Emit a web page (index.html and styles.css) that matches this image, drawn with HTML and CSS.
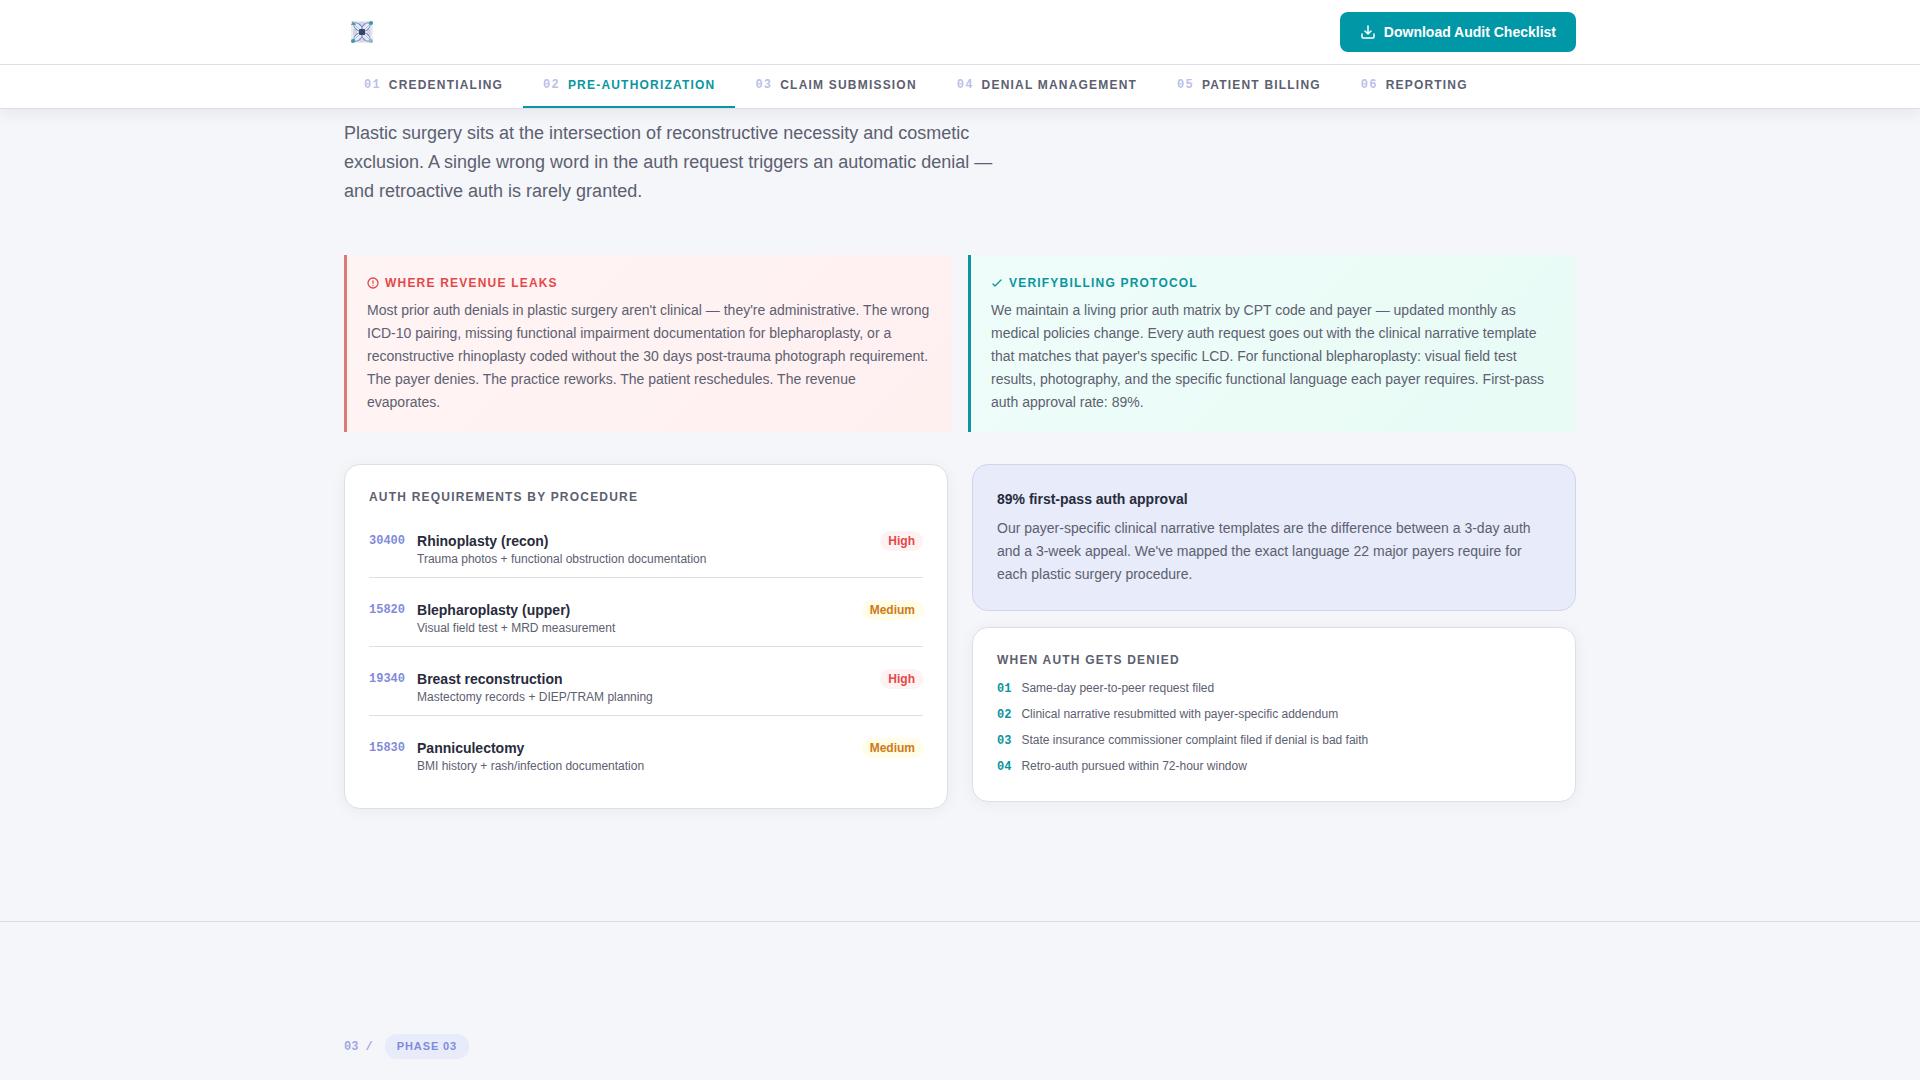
FILE: index.html
```html
<!DOCTYPE html>
<html lang="en">
<head>
<meta charset="utf-8">
<meta name="viewport" content="width=device-width, initial-scale=1">
<title>Plastic Surgery Billing Audit</title>
<link rel="stylesheet" href="styles.css">
</head>
<body>
<header class="site-header">
  <div class="topbar">
    <div class="container topbar-row">
      <a class="logo" href="#" aria-label="Home">
        <svg width="22" height="22" viewBox="0 0 22 22" fill="none">
          <rect width="22" height="22" fill="#e9ecf1"/>
          <path d="M2 8h4v6H2zM8 1h6v4H8zM16 8h4v6h-4zM8 17h6v4H8z" fill="#d3d8de"/>
          <path d="M2 2l18 18M20 2L2 20" stroke="#b4bcd8"/>
          <g stroke="#6f86e8" stroke-width="1">
            <ellipse cx="7" cy="6" rx="5" ry="3" transform="rotate(45 7 6)"/>
            <ellipse cx="15" cy="6" rx="5" ry="3" transform="rotate(-45 15 6)"/>
            <ellipse cx="7" cy="16" rx="5" ry="3" transform="rotate(-45 7 16)"/>
            <ellipse cx="15" cy="16" rx="5" ry="3" transform="rotate(45 15 16)"/>
          </g>
          <rect x="8" y="8" width="6" height="6" rx="1" fill="#36475a"/>
          <circle cx="20" cy="2" r="2" fill="#3d9a9a"/>
          <circle cx="2" cy="20" r="2" fill="#3d9a9a"/>
          <path d="M0 4l2-4 3 4z" fill="#5a9a9a"/>
          <circle cx="20" cy="20" r="2" fill="#93b9b5"/>
        </svg>
      </a>
      <button class="download" type="button">
        <svg width="16" height="16" viewBox="0 0 16 16" fill="none" stroke="currentColor" stroke-width="1.5" stroke-linecap="round" stroke-linejoin="round">
          <path d="M2 10v3a1 1 0 0 0 1 1h10a1 1 0 0 0 1-1v-3M5 7l3 3 3-3M8 2v8"/>
        </svg>
        Download Audit Checklist
      </button>
    </div>
  </div>
  <nav class="phases" aria-label="Phases">
    <div class="container phases-row">
      <a class="tab" href="#p1"><span class="tab-num">01</span>CREDENTIALING</a>
      <a class="tab tab-active" href="#p2" aria-current="true"><span class="tab-num">02</span>PRE-AUTHORIZATION</a>
      <a class="tab" href="#p3"><span class="tab-num">03</span>CLAIM SUBMISSION</a>
      <a class="tab" href="#p4"><span class="tab-num">04</span>DENIAL MANAGEMENT</a>
      <a class="tab" href="#p5"><span class="tab-num">05</span>PATIENT BILLING</a>
      <a class="tab" href="#p6"><span class="tab-num">06</span>REPORTING</a>
    </div>
  </nav>
</header>
<main>
  <section class="phase" id="p2">
    <div class="container">
      <p class="intro">Plastic surgery sits at the intersection of reconstructive necessity and cosmetic exclusion. A single wrong word in the auth request triggers an automatic denial — and retroactive auth is rarely granted.</p>
      <div class="callouts">
        <article class="callout callout-leak">
          <h2 class="callout-title">
            <svg width="12" height="12" viewBox="0 0 12 12" fill="none" stroke="currentColor" stroke-width="1.3" stroke-linecap="round"><circle cx="6" cy="6" r="5"/><path d="M6 3.8v2.4M6 8.2v0"/></svg>
            WHERE REVENUE LEAKS
          </h2>
          <p class="copy">Most prior auth denials in plastic surgery aren't clinical — they're administrative. The wrong ICD-10 pairing, missing functional impairment documentation for blepharoplasty, or a reconstructive rhinoplasty coded without the 30 days post-trauma photograph requirement. The payer denies. The practice reworks. The patient reschedules. The revenue evaporates.</p>
        </article>
        <article class="callout callout-fix">
          <h2 class="callout-title">
            <svg width="12" height="12" viewBox="0 0 12 12" fill="none" stroke="currentColor" stroke-width="1.3" stroke-linecap="round" stroke-linejoin="round"><path d="M2 7l2 2 6-6"/></svg>
            VERIFYBILLING PROTOCOL
          </h2>
          <p class="copy">We maintain a living prior auth matrix by CPT code and payer — updated monthly as medical policies change. Every auth request goes out with the clinical narrative template that matches that payer's specific LCD. For functional blepharoplasty: visual field test results, photography, and the specific functional language each payer requires. First-pass auth approval rate: 89%.</p>
        </article>
      </div>
      <div class="details">
        <article class="card">
          <h2 class="card-title">AUTH REQUIREMENTS BY PROCEDURE</h2>
          <ul class="procedures">
            <li class="procedure"><span class="code">30400</span><div class="procedure-text"><h3 class="name">Rhinoplasty (recon)</h3><p class="small">Trauma photos + functional obstruction documentation</p></div><span class="badge badge-high">High</span></li>
            <li class="procedure"><span class="code">15820</span><div class="procedure-text"><h3 class="name">Blepharoplasty (upper)</h3><p class="small">Visual field test + MRD measurement</p></div><span class="badge badge-medium">Medium</span></li>
            <li class="procedure"><span class="code">19340</span><div class="procedure-text"><h3 class="name">Breast reconstruction</h3><p class="small">Mastectomy records + DIEP/TRAM planning</p></div><span class="badge badge-high">High</span></li>
            <li class="procedure"><span class="code">15830</span><div class="procedure-text"><h3 class="name">Panniculectomy</h3><p class="small">BMI history + rash/infection documentation</p></div><span class="badge badge-medium">Medium</span></li>
          </ul>
        </article>
        <div class="side">
          <article class="card card-stat">
            <h3 class="name">89% first-pass auth approval</h3>
            <p class="copy">Our payer-specific clinical narrative templates are the difference between a 3-day auth and a 3-week appeal. We've mapped the exact language 22 major payers require for each plastic surgery procedure.</p>
          </article>
          <article class="card">
            <h2 class="card-title">WHEN AUTH GETS DENIED</h2>
            <ol class="steps">
              <li class="step"><span class="step-num">01</span><span class="small">Same-day peer-to-peer request filed</span></li>
              <li class="step"><span class="step-num">02</span><span class="small">Clinical narrative resubmitted with payer-specific addendum</span></li>
              <li class="step"><span class="step-num">03</span><span class="small">State insurance commissioner complaint filed if denial is bad faith</span></li>
              <li class="step"><span class="step-num">04</span><span class="small">Retro-auth pursued within 72-hour window</span></li>
            </ol>
          </article>
        </div>
      </div>
    </div>
  </section>
  <section class="phase-next" id="p3">
    <div class="container label-row">
      <span class="label-num">03 /</span>
      <span class="label-pill">PHASE 03</span>
    </div>
  </section>
</main>
</body>
</html>
```
FILE: styles.css
```css
* { box-sizing: border-box; }
body, h2, h3, p, ul, ol { margin: 0; padding: 0; }
ul, ol { list-style: none; }
svg { display: block; flex: none; }

body {
  background: #f4f6fa;
  color: #5c6070;
  font-family: "Liberation Sans", Arial, sans-serif;
  font-size: 14px;
}

.container {
  width: 100%;
  max-width: 1280px;
  margin: 0 auto;
  padding: 0 24px;
}

/* Header */
.site-header {
  position: sticky;
  top: 0;
  z-index: 10;
  background: #fff;
  border-bottom: 1px solid #dddfe4;
  box-shadow: 0 4px 16px rgba(30, 35, 60, 0.07);
}
.topbar { border-bottom: 1px solid #dddfe4; }
.topbar-row {
  display: flex;
  align-items: center;
  justify-content: space-between;
  height: 64px;
}
.logo { padding: 7px; }
.download {
  display: flex;
  align-items: center;
  gap: 8px;
  height: 40px;
  padding: 0 20px;
  border: 0;
  border-radius: 8px;
  background: #0097a7;
  color: #fff;
  font: bold 14px/20px "Liberation Sans", Arial, sans-serif;
}
.phases-row { display: flex; }
.tab {
  display: flex;
  gap: 8px;
  padding: 12px 20px;
  border-bottom: 2px solid transparent;
  color: #5c6070;
  font-size: 12px;
  font-weight: bold;
  line-height: 17px;
  letter-spacing: 0.1em;
  text-decoration: none;
  white-space: nowrap;
}
.tab-active { border-color: #0a95a0; color: #0a95a0; }
.tab-num {
  color: #bcbfea;
  font-family: "Liberation Mono", monospace;
}

/* Phase section */
.phase { padding: 10px 0 112px; }
.intro {
  max-width: 672px;
  margin-bottom: 49px;
  font-size: 18px;
  line-height: 29px;
}
.callouts {
  display: grid;
  grid-template-columns: 1fr 1fr;
  gap: 16px;
  margin-bottom: 32px;
}
.callout {
  padding: 20px 20px 18px;
  border-left: 3px solid;
  border-radius: 0 4px 4px 0;
}
.callout-leak {
  border-color: #e07777;
  background: linear-gradient(135deg, #fff4f4, #fff0f0);
}
.callout-fix {
  border-color: #0a95a0;
  background: linear-gradient(135deg, #effdfa, #e8fbf5);
}
.callout-title {
  display: flex;
  align-items: center;
  gap: 6px;
  margin-bottom: 8px;
  font-size: 12px;
  line-height: 16px;
  letter-spacing: 0.1em;
}
.callout-leak .callout-title { color: #e54848; }
.callout-fix .callout-title { color: #0a95a0; }
.copy { font-size: 14px; line-height: 23px; }

/* Cards */
.details {
  display: grid;
  grid-template-columns: 1fr 1fr;
  align-items: start;
  gap: 24px;
}
.side { display: grid; gap: 16px; }
.card {
  padding: 24px;
  border: 1px solid #dddfe6;
  border-radius: 16px;
  background: #fff;
  box-shadow: 0 2px 16px rgba(30, 35, 60, 0.05);
}
.card-stat {
  border-color: #d0d5ec;
  background: #e7ebfa;
  box-shadow: none;
}
.card-title {
  font-size: 12px;
  line-height: 16px;
  letter-spacing: 0.1em;
}
.name {
  color: #282b3c;
  font-size: 14px;
  line-height: 20px;
}
.card-stat .name { margin-bottom: 8px; }
.small { font-size: 12px; line-height: 16px; }

.procedures { display: grid; gap: 12px; margin-top: 16px; }
.procedure {
  display: flex;
  align-items: flex-start;
  gap: 12px;
  padding: 10px 0;
  border-bottom: 1px solid #dddfe4;
}
.procedure:last-child { border-bottom: 0; }
.procedure-text { flex: 1; }
.code {
  color: #7f8bda;
  font: bold 12px/20px "Liberation Mono", monospace;
}
.badge {
  padding: 2px 8px;
  border-radius: 10px;
  font-size: 12px;
  font-weight: bold;
  line-height: 16px;
}
.badge-high { background: #fef2f2; color: #e54848; }
.badge-medium { background: #fffce8; color: #cf7a17; }

.steps { display: grid; gap: 7px; margin-top: 12px; }
.step { display: flex; gap: 10px; }
.step-num {
  color: #0a95a0;
  font: bold 12px/19px "Liberation Mono", monospace;
}

/* Following phase */
.phase-next {
  padding-top: 112px;
  border-top: 1px solid #dddfe4;
}
.label-row { display: flex; align-items: center; gap: 12px; }
.label-num {
  color: #a3a8e0;
  font: bold 12px/16px "Liberation Mono", monospace;
}
.label-pill {
  padding: 4px 12px;
  border-radius: 12px;
  background: #e7ebfa;
  color: #7f8bda;
  font-size: 11px;
  font-weight: bold;
  line-height: 17px;
  letter-spacing: 0.08em;
}
```
